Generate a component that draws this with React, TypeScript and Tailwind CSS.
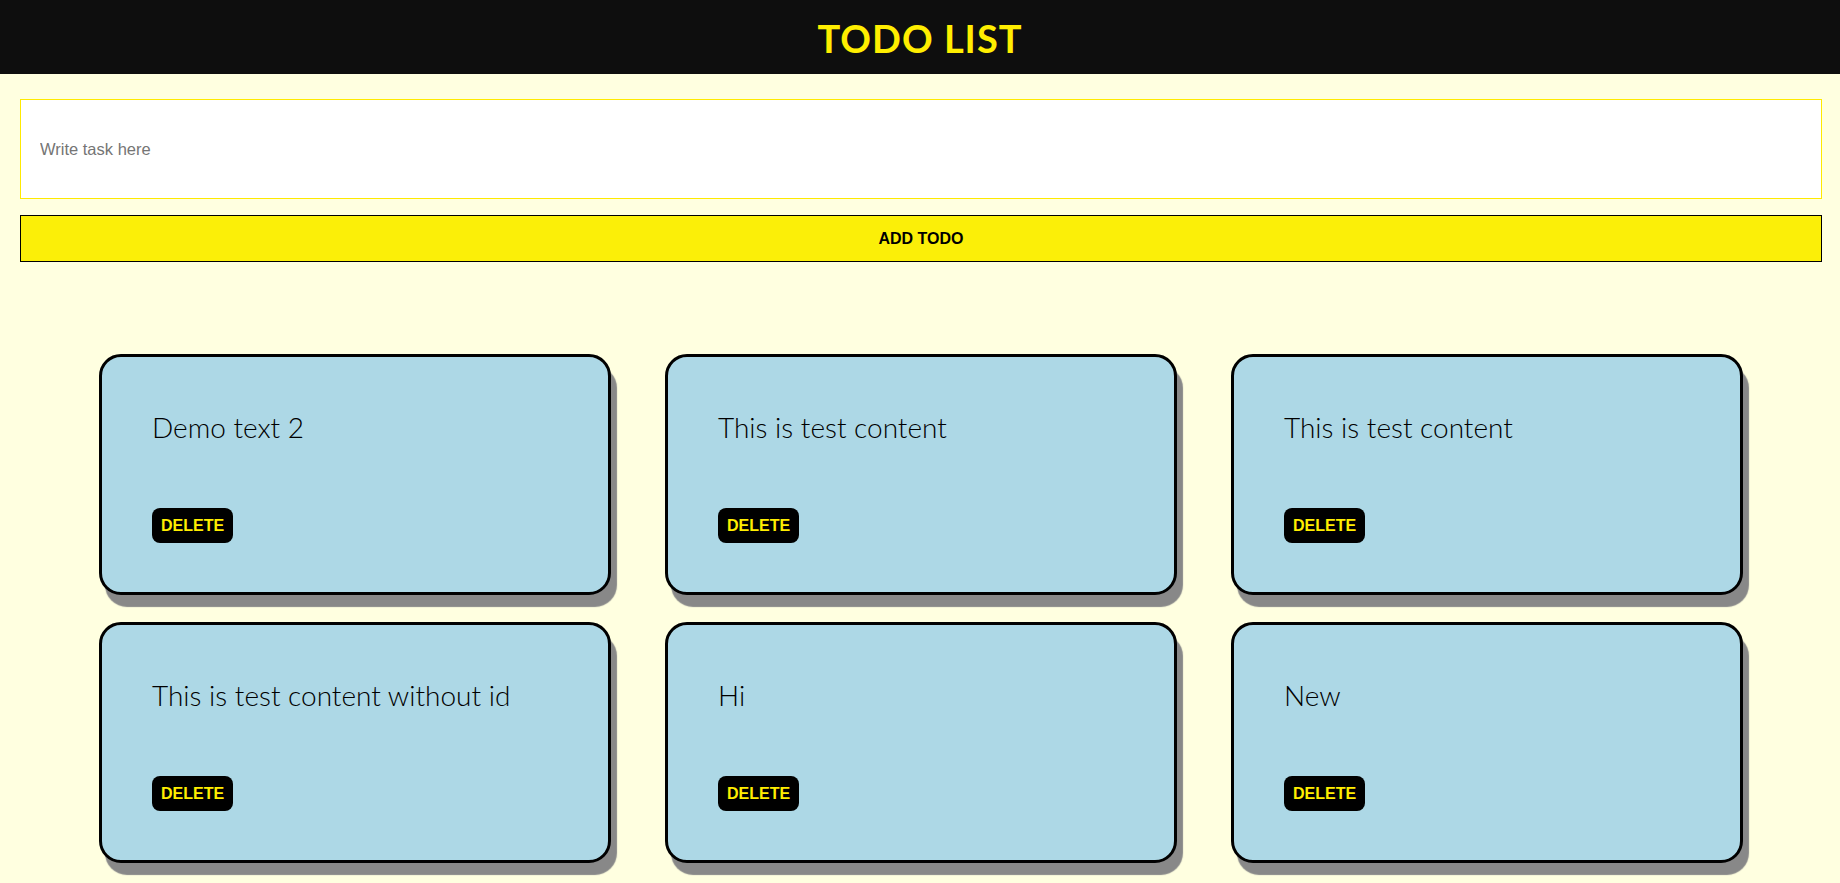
import React, { useState } from "react";

type Todo = { id: number; text: string };

const initialTodos: Todo[] = [
	{ id: 1, text: "Demo text 2" },
	{ id: 2, text: "This is test content" },
	{ id: 3, text: "This is test content" },
	{ id: 4, text: "This is test content without id" },
	{ id: 5, text: "Hi" },
	{ id: 6, text: "New" },
];

export default function App() {
	const [todos, setTodos] = useState<Todo[]>(initialTodos);
	const [text, setText] = useState("");

	// * add a todo
	const handleAdd = () => {
		if (text.trim() === "") return;
		setTodos((t) => [...t, { id: Date.now(), text }]);
		setText("");
	};

	const removeTodo = (id: number) => setTodos((t) => t.filter((todo) => todo.id !== id));

	return (
		<div className="min-h-screen bg-[#ffffe0]">
			<header className="h-[74px] bg-[#0e0e0e] flex items-center justify-center">
				<h1 className="font-['Lato',sans-serif] font-bold text-[38px] tracking-[1px] text-[#ffee00] leading-none pt-[2px]">
					TODO LIST
				</h1>
			</header>

			{/* add todo form */}
			<div className="pl-[20px] pr-[18px] pt-[25px] flex flex-col gap-[16px]">
				<input
					className="h-[100px] w-full bg-white border border-[#ffea00] pl-[19px] font-['Liberation_Sans',Arial,sans-serif] text-[16.5px] text-black placeholder:text-[#757575] outline-none"
					type="text"
					placeholder="Write task here"
					value={text}
					onChange={(e) => setText(e.target.value)}
				/>
				<button
					className="h-[47px] w-full bg-[#fbef08] border border-black font-['Liberation_Sans',Arial,sans-serif] font-bold text-[16px] text-black"
					onClick={handleAdd}
				>
					ADD TODO
				</button>
			</div>

			{/* todo cards */}
			<div className="grid grid-cols-[repeat(3,512px)] justify-center gap-x-[54px] gap-y-[27px] pt-[92px] pb-[40px] pl-[2px]">
				{todos.map((todo) => (
					<div
						key={todo.id}
						className="h-[241px] bg-[#add8e6] border-[3px] border-black rounded-[22px] shadow-[6px_12px_1px_#888888] pl-[50px] pt-[52px] flex flex-col items-start"
					>
						<p className="font-['Lato',sans-serif] font-light text-[28px] leading-[36px] text-black">
							{todo.text}
						</p>
						<button
							className="mt-[63px] h-[35px] px-[9px] rounded-lg bg-black text-[#ffee00] font-['Liberation_Sans',Arial,sans-serif] font-bold text-[16px]"
							onClick={() => removeTodo(todo.id)}
						>
							DELETE
						</button>
					</div>
				))}
			</div>
		</div>
	);
}
